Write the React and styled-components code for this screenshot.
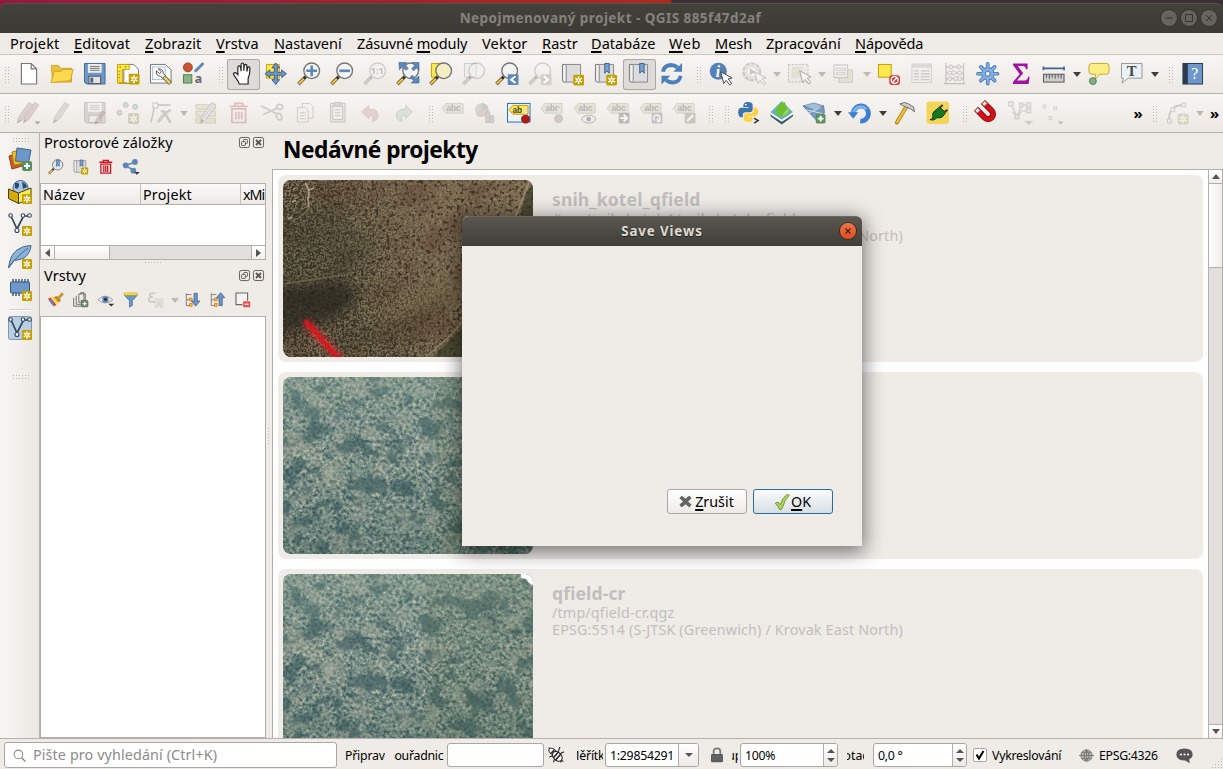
import React from 'react';
import styled, { createGlobalStyle, css } from 'styled-components';

const FONT = '"Noto Sans", "Open Sans", "Liberation Sans", sans-serif';

const GlobalStyle = createGlobalStyle`
  * { box-sizing: border-box; }
  html, body { margin: 0; padding: 0; overflow: hidden; }
  body { font-family: ${FONT}; font-size: 14.5px; color: #000; background: #efebe7; }
  u { text-decoration-thickness: 2px; text-underline-offset: 2px; text-decoration-skip-ink: none; }
`;

/* ------------------------------------------------------------------ icons */

const Badge = ({ x = 12, y = 12, s = 11, fill = '#c4a000', ink = '#fff' }) => (
  <g transform={`translate(${x} ${y}) scale(${s / 11})`}>
    <rect width="11" height="11" rx="1.5" fill={fill} />
    <path d="M5.5 1.5v8M2 3.5l7 4M2 7.5l7-4" stroke={ink} strokeWidth="1.5" />
    <circle cx="5.5" cy="5.5" r=".9" fill={fill} />
  </g>
);
const PlusBadge = ({ x = 14, y = 14 }) => (
  <g transform={`translate(${x} ${y})`}>
    <rect width="10" height="10" rx="2" fill="#59905c" />
    <path d="M5 2v6M2 5h6" stroke="#fff" strokeWidth="2" />
  </g>
);
const Lens = ({ dim, cx = 15, cy = 9, r = 8, children, fill = '#f4f5f3' }) => (
  <g opacity={dim ? 0.28 : 1}>
    <path d={`M${cx - 6} ${cy + 6}L1.5 22.5`} stroke="#333" strokeWidth="3.4" />
    <path d={`M${cx - 8} ${cy + 8}L1.7 22.300`} stroke={dim ? '#888' : '#fcc536'} strokeWidth="2.200" />
    <circle cx={cx} cy={cy} r={r} fill={fill} stroke="#777" strokeWidth="1.4" />
    {children}
  </g>
);
const Cursor = ({ x = 11, y = 9 }) => (
  <path transform={`translate(${x} ${y})`} d="M1 1l3 12 2.6-3.2 3.6 4.6 2-1.6-3.6-4.5 4-1z" fill="#fff" stroke="#444" strokeWidth="1" />
);
const Tag = ({ children }) => (
  <g opacity=".5">
    <path d="M5 2.500h17.500v10H5L1 7.500z" fill="#d8d5c4" stroke="#b3b1a3" />
    <text x="5.500" y="10.300" fontSize="8.500" fontWeight="bold" fill="#777" fontFamily="Liberation Sans">abc</text>
    {children}
  </g>
);
const MapSheet = () => (
  <g>
    <path d="M1.500 2.500h4v18h-2q-2 0-2-2z" fill="#eee" stroke="#777" />
    <path d="M5.500 2.500h14.500v18H4" fill="#dcdcdc" stroke="#888" />
    <path d="M5.500 2.500v17" stroke="#999" />
  </g>
);
const Ribbon = ({ x = 12 }) => <path d={`M${x} 1.500h4.500v10l-2.200-2.600-2.300 2.600z`} fill="#7ba3d0" stroke="#38618f" />;
const Floppy = () => (
  <g>
    <path d="M1.500 1.500h21v21h-19l-2-2z" fill="#6d97c9" stroke="#466a94" />
    <rect x="5" y="2" width="14" height="9" fill="#eee" />
    <path d="M7 4.500h10M7 6.500h10M7 8.500h10" stroke="#777" />
    <rect x="6" y="14.500" width="12" height="7.500" fill="#e2e2e2" stroke="#555" />
    <rect x="7.500" y="16" width="3" height="5" fill="#466a94" />
  </g>
);
const Pencil = ({ x = 0, fill = '#ccc8b4' }) => (
  <g transform={`translate(${x} 0)`}>
    <path d="M15 1.500l4.500 2.500L9 19l-5.500 3.500L5 16z" fill={fill} stroke="#999" />
    <path d="M17 3L6.500 17.500" stroke="#aaa" />
    <path d="M3.500 22.500l1-4 2.500 1.500z" fill="#777" />
  </g>
);
const Vee = ({ stroke = '#33475b' }) => (
  <g fill="none" stroke={stroke} strokeWidth="1.700">
    <path d="M3 4l6 13L15.500 4h6" />
    <g fill="#fff" strokeWidth="1.100"><circle cx="2.600" cy="3.500" r="1.800" /><circle cx="9" cy="18.500" r="2" /><circle cx="15" cy="3.500" r="1.800" /><circle cx="21.500" cy="3.500" r="1.800" /></g>
  </g>
);
const SmallDown = ({ x = 18, y = 20, fill = '#555' }) => <path d={`M${x} ${y}h6l-3 3z`} fill={fill} />;

const ICONS = {
  newProject: <path d="M4.500 1.500h10l5.500 5.500v15.500H4.500zM14.500 1.500V7H20" fill="#fff" stroke="#777" strokeWidth="1.200" />,
  open: <g stroke="#d1a62c"><path d="M1.500 3.500h7l2 3h11.500v14H2.500z" fill="#e9bf3c" /><path d="M1 21L4.500 9.500h7l2-2h10L21 19z" fill="#fcd94f" /></g>,
  save: <Floppy />,
  newLayout: <g><path d="M8 2.500h10l5 5V22H8z" fill="#fff" stroke="#777" /><path d="M1.500 2.500h12v5h-7v14h-5z" fill="#fce94f" stroke="#c4a000" /><path d="M3 21.500h8" stroke="#c4a000" strokeWidth="2" /><path d="M9 5h3M3.500 5h3M3.500 9v10" stroke="#c4a000" strokeDasharray="1.500 1.500" strokeWidth="2" /><Badge x={13} y={12} /></g>,
  layoutMgr: <g><path d="M1.500 2.500h15l6 5.500v13.500h-21z" fill="#fff" stroke="#777" /><rect x="3.500" y="5" width="13" height="13" fill="none" stroke="#9bc0e5" /><path d="M14 14l8 8" stroke="#7a6b2e" strokeWidth="4.500" /><path d="M14.500 14.500l7 7" stroke="#e3d27a" strokeWidth="2.500" /><path d="M7.500 9q-.5 5 4 5.500l2.500 2 2.500-2.500-2-2.500q0-4.500-5-4.500l3 3-1.500 2z" fill="#fff" stroke="#555" /></g>,
  style: <g><circle cx="6" cy="5.500" r="4.500" fill="#cb5530" stroke="#9d3b1c" /><path d="M21 2l-7 7" stroke="#5d87b7" strokeWidth="3" strokeLinecap="round" /><rect x="1.500" y="13" width="8.500" height="8.500" fill="#8db38c" stroke="#4c8050" /><text x="13" y="21.500" fontSize="12.500" fontWeight="bold" fill="#666">a</text></g>,
  hand: <path d="M8.500 22.500c-1-4-5-7-6-10.500 .5-1.800 2.500-1.500 4.500 1V5.500c0-2 2.500-2 2.800 0l.5 4V2.500c0-2 2.600-2 2.800 0v6.500l.5-5.500c.3-1.600 2.600-1.500 2.600.3v6l.8-4c.5-1.400 2.400-1 2.400.6 0 5-.9 8-1.900 10.500v5.600z" fill="#fff" stroke="#222" strokeWidth="1.200" />,
  panSel: <g><path d="M2.500 2.500h13v14h-13z" fill="#fce94f" stroke="#c4a000" /><path d="M12 1l4 5h-2.500v4.500H18V8l5 4-5 4v-2.500h-4.500V18H16l-4 5-4-5h2.500v-4.500H6V16l-5-4 5-4v2.500h4.500V6H8z" fill="#6d97c9" stroke="#2b4b6f" strokeWidth=".8" /></g>,
  zoomIn: <Lens><path d="M15 3.500v11M9.500 9h11" stroke="#5d87b7" strokeWidth="2.600" /></Lens>,
  zoomOut: <Lens><path d="M9.500 9h11" stroke="#5d87b7" strokeWidth="2.800" /></Lens>,
  zoom11: <Lens dim><text x="7.800" y="12.500" fontSize="9.500" fontWeight="bold" fill="#333">1:1</text></Lens>,
  zoomFull: <g><Lens /><path d="M3 .5h8L9 3l3.500 3.500-2 2L6.500 5 3.500 8zM23.500.5v8L21 6l-3 3-2-2 3-3.500L16.500.5zM23.500 21.500h-8L18 19l-3.500-3.500 2-2L20 17l3.500-2.500z" fill="#5d87b7" stroke="#3c638f" strokeWidth=".6" /></g>,
  zoomSel: <g><path d="M2.500 1.500h12v14h-12z" fill="#fce94f" stroke="#c4a000" /><Lens fill="#f5eec3" /></g>,
  zoomLayer: <g><path d="M2.500 1.500h12v14h-12z" fill="#eee" stroke="#ccc" /><Lens dim /></g>,
  zoomLast: <g><Lens /><rect x="13" y="12.500" width="11" height="11" rx="1" fill="#5d87b7" /><path d="M21 14.500L16.500 18l4.500 3.500" stroke="#fff" strokeWidth="2" fill="none" /></g>,
  zoomNext: <g><Lens dim /><rect x="13" y="12.500" width="11" height="11" rx="1" fill="#d2d0cc" /><path d="M16 14.500l4.500 3.500-4.500 3.500" stroke="#fff" strokeWidth="2" fill="none" /></g>,
  newMap: <g><MapSheet /><Badge x={12.5} y={13} /></g>,
  newBookmark: <g><MapSheet /><Ribbon x={11} /><Badge x={12.5} y={13} /></g>,
  bookmarks: <g transform="translate(1 0)"><MapSheet /><Ribbon /></g>,
  refresh: <g fill="none" stroke="#4d80bb" strokeWidth="4"><path d="M3 10q1-6.500 8-7 4 0 7 2.500" /><path d="M21 14q-1 6.500-8 7-4 0-7-2.500" /><path d="M22.500 1v9h-9zM1.500 23v-9h9z" fill="#4d80bb" stroke="none" /></g>,
  identify: <g><circle cx="9.500" cy="9.500" r="8.700" fill="#5482b8" /><text x="7" y="15" fontSize="16" fontWeight="bold" fontStyle="italic" fill="#fff" fontFamily="Liberation Serif">i</text><Cursor /></g>,
  action: <g opacity=".26"><circle cx="10" cy="10" r="8.500" fill="#ddd" stroke="#666" strokeWidth="2.500" strokeDasharray="4.500 1" /><circle cx="10" cy="10" r="5.500" fill="#fff" stroke="#777" /><path d="M8 6.500l6 3.500-6 3.500z" fill="#555" /><Cursor x={12} /></g>,
  select: <g opacity=".42"><rect x="1.500" y="2.500" width="20" height="18" fill="#e6e4dc" stroke="#777" strokeDasharray="2 1.500" /><rect x="5" y="5" width="11" height="11" fill="#cfcbb6" /><Cursor x={12} y={8} /></g>,
  selectForm: <g opacity=".5"><rect x="7" y="8" width="14" height="13" fill="#d8d4bb" stroke="#aaa" /><rect x="2" y="3" width="14" height="13" fill="#eee" stroke="#999" /><path d="M4.500 6.500h9v2h-9zM4.500 11h9v2h-9z" fill="#fff" stroke="#999" strokeWidth=".8" /></g>,
  deselect: <g><rect x="1.500" y="2.500" width="13" height="13" fill="#fce94f" stroke="#c4a000" /><rect x="12.500" y="13.500" width="11" height="10" rx="3" fill="#de3535" /><circle cx="18" cy="18.500" r="3.500" fill="none" stroke="#fff" strokeWidth="1.400" /><path d="M15.500 21l5-5" stroke="#fff" strokeWidth="1.400" /></g>,
  table: <g opacity=".42"><rect x="2" y="2" width="20" height="19" fill="#eee" stroke="#aaa" /><rect x="2" y="2" width="20" height="4" fill="#bbb" /><path d="M4 9h5M11 9h9M4 12h5M11 12h9M4 15h5M11 15h9M4 18h5M11 18h9" stroke="#999" strokeWidth="1.300" /></g>,
  abacus: <g opacity=".42" fill="none" stroke="#888"><path d="M3 1v21M21 1v21M3 5h18M3 11h18M3 17h18M1 22h22" strokeWidth="1.300" /><g fill="#eed5d5"><circle cx="8" cy="5" r="2" /><circle cx="16" cy="5" r="2" /></g><g fill="#eee"><circle cx="7" cy="11" r="2" /><circle cx="11" cy="11" r="2" /><circle cx="17" cy="11" r="2" /><circle cx="7" cy="17" r="2" /><circle cx="13" cy="17" r="2" /><circle cx="17" cy="17" r="2" /></g></g>,
  gear: <g stroke="#4277b6" fill="none"><path d="M12 2v20M2 12h20M5 5l14 14M19 5L5 19" strokeWidth="3.800" strokeLinecap="round" /><circle cx="12" cy="12" r="6.800" fill="#4277b6" stroke="none" /><path d="M12 2v20M2 12h20M5 5l14 14M19 5L5 19" strokeWidth="2.200" stroke="#82aee0" strokeLinecap="round" /><circle cx="12" cy="12" r="6" fill="#82aee0" stroke="none" /><circle cx="12" cy="12" r="2.500" fill="#f4f2ee" stroke="#4277b6" /></g>,
  sum: <path d="M4 1.500h15v6h-1.500q-.5-3-3-3.500H9l5.500 7.500L8 19h8q3-.5 3.500-4H21l-1 7.500H4v-2l7-8L4 3z" fill="#a112a1" />,
  measure: <g><path d="M1 6.500h22M1.500 4.500v4M22.500 4.500v4" stroke="#44658e" strokeWidth="1.800" /><rect x="1.500" y="12.500" width="21" height="8" fill="#ccc" stroke="#555" /><path d="M4.500 13v3M7.500 13v4M10.500 13v3M13.500 13v4M16.500 13v3M19.500 13v4" stroke="#555" /></g>,
  tips: <g><path d="M5 1.500h15q2.500 0 2.500 2.500v6q0 2.500-2.500 2.500h-7L8 18l1-5.500H5Q2 12.500 2 10V4q0-2.500 3-2.500z" fill="#fcee83" stroke="#c4a83a" /><circle cx="6" cy="19.500" r="3.500" fill="#84b083" stroke="#4c8050" /></g>,
  textNote: <g><path d="M1.500 1.500h21v15h-14L2 21.500l1.500-5h-2z" fill="#eaf1f4" stroke="#999" /><text x="7" y="14" fontSize="15" fontWeight="bold" fill="#444" fontFamily="Liberation Serif">T</text></g>,
  help: <g><rect x="2" y="1.500" width="20" height="21" fill="#6d97c9" stroke="#273b50" /><rect x="2" y="1.500" width="5" height="21" fill="#2a3c4e" /><text x="10.500" y="17.500" fontSize="16" fill="#fff" fontFamily="Liberation Serif">?</text></g>,

  editsMulti: <g opacity=".45"><Pencil x={-3} fill="#c7aaa8" /><Pencil x={3} fill="#c8a4a2" /><SmallDown x={18} y={21} /></g>,
  edit: <g opacity=".45"><Pencil /></g>,
  saveEdits: <g><g opacity=".3" fill="none"><path d="M1.500 1.500h21v21h-19l-2-2z" fill="#999" stroke="#666" /><rect x="5" y="2" width="14" height="9" fill="#eee" /><path d="M7 4.500h10M7 6.500h10M7 8.500h10" stroke="#777" /><rect x="6" y="14.500" width="12" height="7.500" fill="#e2e2e2" stroke="#555" /></g><g transform="translate(10 9) scale(.65)" opacity=".6"><Pencil fill="#d2aaa4" /></g></g>,
  addPoint: <g opacity=".6"><g fill="#c0ccc3" stroke="#98a59b"><circle cx="3.500" cy="12" r="2.500" /><circle cx="10" cy="4" r="2.500" /><circle cx="19.500" cy="6" r="2.500" /></g><Badge x={12.5} y={12.5} fill="#bdb79c" /></g>,
  vertex: <g opacity=".36" fill="none" stroke="#777"><path d="M6 4h16M6 4L2 22" strokeWidth="1.500" /><rect x="4" y="2" width="5" height="5" fill="#fff" /><path d="M9 21.500L17 12" stroke="#999" strokeWidth="3.500" /><path d="M12 10l6 2 4-3M16 12l6 10" stroke="#888" strokeWidth="2.500" /></g>,
  modify: <g opacity=".5"><path d="M2 3.500h20v5H2zM2 10.500h20v5H2zM2 17.500h20v5H2z" fill="#dad6b9" stroke="#b7b391" /><g transform="translate(3 0)"><Pencil fill="#ddd" /></g></g>,
  trash: <g opacity=".28" fill="none" stroke="#a33c3c" strokeWidth="1.700"><path d="M5 8h14v14H5zM3 5.500h18M8 5V2.500h8V5M9 11v8M12 11v8M15 11v8" /></g>,
  cut: <g opacity=".28" fill="none" stroke="#777" strokeWidth="1.800"><path d="M1 5l16 8M3 14l15-7" /><ellipse cx="20" cy="6" rx="3" ry="2.500" /><ellipse cx="19.500" cy="16" rx="2.500" ry="3.500" transform="rotate(-20 19.500 16)" /></g>,
  copy: <g opacity=".42" fill="#f3f2ef" stroke="#999"><path d="M9.500 2.500h8l3 3v12h-11z" /><path d="M4.500 6.500h8l3 3v12h-11z" /><path d="M7 12h6M7 15h6M7 18h6" /></g>,
  paste: <g opacity=".48" fill="#f3f2ef" stroke="#999"><path d="M4.500 2.500h15v19h-15z" fill="#dcdad4" /><path d="M7 5h10v14H7z" /><path d="M8.500 1.500h7v4h-7z" fill="#bbb" /><path d="M9 9h6M9 12h6M9 15h6" /></g>,
  undo: <path opacity=".4" d="M3 11l7-6.500v4q10-.5 9.500 7-.5 4-5.500 5.500-1-1.500 0-2.500 2-3.500-4-3.500V18z" fill="#cfa79e" stroke="#b08a82" />,
  redo: <path opacity=".4" d="M21 11l-7-6.500v4q-10-.5-9.500 7 .5 4 5.500 5.500 1-1.500 0-2.500-2-3.500 4-3.500V18z" fill="#b9cdbf" stroke="#8aa593" />,
  label: <Tag />,
  diagram: <g opacity=".42"><circle cx="8" cy="9" r="7" fill="#b3b0a8" /><path d="M8 9V2a7 7 0 0 1 7 7z" fill="#8f9c8c" /><path d="M8 9L2 14a7 7 0 0 0 8 1.500z" fill="#c49c98" /><path d="M12 11h4v11h-4zM16 15h4v7h-4z" fill="#aaa" stroke="#888" /></g>,
  pinActive: <g><rect x=".5" y="2.500" width="23" height="19" fill="#eef3f7" stroke="#1f6fd0" /><path d="M6 4.500h15.500v9H6L2 9z" fill="#fce94f" stroke="#c4a000" /><text x="5.500" y="12" fontSize="8.500" fontWeight="bold" fill="#444" fontFamily="Liberation Sans">ab</text><path d="M19 7v9" stroke="#ddd" strokeWidth="2.500" /><circle cx="19" cy="18.500" r="4.300" fill="#b01c1c" stroke="#7c1010" strokeWidth=".6" /></g>,
  pin: <Tag><path d="M19 7v9" stroke="#ddd" strokeWidth="2.500" /><circle cx="19" cy="18" r="4" fill="#b9a3a3" stroke="#999" /></Tag>,
  labelEye: <Tag><ellipse cx="16" cy="18.500" rx="7" ry="4" fill="#eee" stroke="#777" /><circle cx="16" cy="18.500" r="2.500" fill="#777" /></Tag>,
  labelMove: <Tag><rect x="13" y="12" width="11" height="11" rx="1" fill="#888" /><path d="M14.500 17.500h7M18 14l3.500 3.500L18 21" stroke="#fff" strokeWidth="2" fill="none" /></Tag>,
  labelRotate: <Tag><rect x="13" y="12" width="11" height="11" rx="1" fill="#999" /><path d="M16 20a3.300 3.300 0 1 1 4.500 0M19 17.500v3.500h3" stroke="#fff" strokeWidth="1.500" fill="none" /></Tag>,
  labelEdit: <Tag><rect x="13" y="12" width="11" height="11" rx="1" fill="#a5a18e" /><path d="M15.500 20.500l6-6" stroke="#fff" strokeWidth="2.200" /></Tag>,
  python: <g><path d="M11 1C6.500 1 6.500 3.500 6.500 6H12v1H4C0 7 .5 16.500 4 16.500h2V14q0-2.500 3-2.500h4.500q2.500 0 2.500-2.500V4Q16 1 11 1z" fill="#3b75a9" /><path d="M11.500 21.500c5 0 4.500-2.500 4.500-5h-5.500v-1H18.500c4.500 0 4-9.500 0-9H17v3.500q0 2.500-3 2.500h-4q-3 0-3 2.500v4q0 2.500 4.500 2.500z" fill="#ffd343" /><circle cx="9" cy="3.700" r="1" fill="#fff" /><path d="M17.500 17.500l4 2.500-4 2.500" stroke="#333" strokeWidth="1.500" fill="none" /></g>,
  plugin1: <g><path d="M.5 13v2.500L12 24l11.500-8.500V13z" fill="#335a68" /><path d="M.5 11.500L12 0l11.500 11.500L12 19z" fill="#66b6ae" /><path d="M.5 11.500L12 19l11.500-7.500v2.200L12 21.300.5 13.700z" fill="#fff" /><path d="M6 12q0-8 9-11 5 12-4 14-3 0-5-3z" fill="#70bf2e" /><path d="M13 15q4 0 7-7-5 0-7 7z" fill="#9bd94c" /></g>,
  mesh: <g><path d="M0 5l11-3 10 3-9 5z" fill="#a3bdd9" stroke="#6486ab" strokeWidth=".8" /><path d="M0 5l12 5 9-5 1 7-8 8z" fill="#7899bd" stroke="#56789d" strokeWidth=".8" /><path d="M4 9l16 4M6 12l12-5" stroke="#c8dcf0" /><PlusBadge x={13} y={13} /></g>,
  rotate: <g><path d="M5.500 12a7.700 7.700 0 1 1 7 8.500" fill="none" stroke="#3c7ed0" strokeWidth="5" /><path d="M5.800 11.500a7.500 7.500 0 0 1 13-3" fill="none" stroke="#7db2ee" strokeWidth="3" /><path d="M0 11.500h10.500L5.300 18z" fill="#3c7ed0" /></g>,
  hammer: <g><path d="M13 7L4 22" stroke="#a87d14" strokeWidth="4" strokeLinecap="round" /><path d="M13 7L4.300 21.500" stroke="#f0bd37" strokeWidth="2.400" strokeLinecap="round" /><path d="M7 3q5-3 9 0l5 3 1 5-4-3-5-2q-3-1-6-3z" fill="#ccc" stroke="#555" strokeWidth=".8" /></g>,
  plug: <g><rect x=".5" y=".5" width="23" height="23" rx="3" fill="#f3d558" /><path d="M4 19q3 0 3-3-1-4 2-6l5-4 6 6-3 4q-3 2-6 1-1 2-4 2.500z" fill="#157a1f" stroke="#173a10" /><path d="M14 7l3-3M19 11l3-2" stroke="#333" strokeWidth="2" /></g>,
  magnet: <g transform="rotate(-45 12 12)"><path d="M4.500 2v12a7.500 7.500 0 0 0 15 0V2h-5v12a2.500 2.500 0 0 1-5 0V2z" fill="#d80f16" stroke="#8b0a0e" /><path d="M5 2h4V5.500H5zM15 2h4V5.500h-4z" fill="#eee" stroke="#b55" strokeWidth=".7" /></g>,
  topo: <g opacity=".4" fill="none" stroke="#aaa" strokeWidth="1.600"><path d="M3 3l6 13 5-12h7M5 11l3 4M14 10h7M14 10l-4 6" /><path d="M1 1h4v4H1zM7 14h4v4H7zM12 2h3v4h-3zM19 2h4v4h-4zM19 8h4v4h-4z" fill="#e7e5e1" /><SmallDown y={21} fill="#777" /></g>,
  dots: <g opacity=".4"><path d="M2 4h3v3H2zM13 6h3v3h-3zM8 16h3v3H8z" fill="#eee" stroke="#999" /><SmallDown x={17} y={21} fill="#777" /></g>,
  curve: <g opacity=".42"><path d="M3 21Q2 4 18 4" fill="none" stroke="#999" strokeWidth="2" /><path d="M1.500 18.500h4v4h-4zM5 7h4v4H5zM16 2h4v4h-4z" fill="#eee" stroke="#999" /><Badge x={12} y={13} fill="#b5b193" /></g>,

  dataSource: <g><path d="M1 9l10-3 3 13-10 3z" fill="#cf5a2a" stroke="#943a16" /><path d="M4 5l11-3 2 14-11 2z" fill="#f2c41b" stroke="#a8830e" /><path d="M9 1l14 2-2.500 13L7.500 14z" fill="#6d97c9" stroke="#3d648f" /><PlusBadge /></g>,
  geopackage: <g><circle cx="12.500" cy="8" r="7.500" fill="#a9c5e3" stroke="#44658e" /><path d="M7 3q5-1 4 3t-4 2zM14 2q4 1 5 5l-4 2z" fill="#2d4a6c" /><path d="M.5 9l10 4v10.500L.5 18.500z" fill="#d8a908" stroke="#3f3a1a" /><path d="M10.500 13L23 8v10.500l-12.500 5z" fill="#fce94f" stroke="#3f3a1a" /><Badge x={14} y={14} s={10} /></g>,
  shapefile: <g><Vee /><Badge x={14} y={14} s={10} /></g>,
  spatialite: <g><path d="M.5 23Q2 10 9 5 15 .5 23 .5 22 9 16 13q-5 2-10 2.500z" fill="#8eb2d8" stroke="#44658e" /><path d="M.5 23Q7 13 20 3" stroke="#44658e" fill="none" /><Badge x={14} y={14} s={10} /></g>,
  memory: <g><path d="M5 1v4M8 1v4M11 1v4M14 1v4M17 1v4M20 1v4M5 14v4M8 14v4M11 14v4" stroke="#33475b" strokeWidth="1.300" /><rect x="2.500" y="4" width="19" height="11" rx="1" fill="#6d97c9" stroke="#33577f" /><Badge x={14} y={13} s={10} /></g>,
  virtual: <g><rect x=".5" y=".5" width="23" height="23" rx="2" fill="#b9cde3" stroke="#7d98b5" /><Vee /><Badge x={14} y={14} s={10} /></g>,

  zoomBm: <g><Lens fill="#e6eaee" /><Ribbon x={13} /></g>,
  trashRed: <g fill="none" stroke="#cc1420" strokeWidth="2"><path d="M4.500 8h15v14h-15zM2 5h20M8 5V2h8v3M9 10v10M12 10v10M15 10v10" /></g>,
  share: <g stroke="#5d87b7" strokeWidth="2.500" fill="#5d87b7"><path d="M19 4.500L4 10l13 8" fill="none" /><circle cx="18.500" cy="4.500" r="3.200" /><circle cx="4" cy="10" r="3.200" /><circle cx="16" cy="18" r="3.200" /><path d="M17 20h9l-4.500 4.500z" fill="#333" stroke="none" /></g>,
  brush: <g><path d="M23 2l-8 9" stroke="#c9963a" strokeWidth="4.500" /><path d="M0 10l13-3 6 7-10 8z" fill="#f09331" /><path d="M3 9l5-1 9 9-4 3z" fill="#fbe16a" /><path d="M0 10l4-1 9 11-4 2z" fill="#e33c32" /><path d="M11 7l3-1 6 7-3 3z" fill="#b98525" /><path d="M1 13l4-1 5 8-3 1z" fill="#5a8ccb" /></g>,
  group: <g fill="none" stroke="#666" strokeWidth="1.400"><path d="M1 9v13h14M5 6v13h10M9 3h10v13H9zM12 3V1h5v12h-5" /><PlusBadge x={13} y={13} /></g>,
  eye: <g><path d="M0 12Q11 1 23 12 11 22 0 12z" fill="#f0f0f0" stroke="#999" strokeWidth="1.500" /><circle cx="11.500" cy="11.500" r="5" fill="#5d87b7" /><circle cx="11.500" cy="11.500" r="2.200" fill="#222" /><path d="M16 18h9l-4.500 4.500z" fill="#333" /></g>,
  filter: <g><path d="M2 5h20l-7.500 8.500V21L10 23.500v-10z" fill="#6d97c9" stroke="#3d648f" /><path d="M2 1.500h20v3.500H2z" fill="#fce94f" stroke="#c4a000" /></g>,
  epsilon: <g opacity=".35"><path d="M11 2Q2 1 3 5q0 2 4 2.500Q1 8 1 12q1 5 10 3" fill="none" stroke="#777" strokeWidth="2.200" /><path d="M12 11h11v13h-3.500v-9h-1v6h-2v-6h-1v9H12z" fill="#ddd" stroke="#888" /></g>,
  expand: <g><path d="M2 2v19h6M2 12h6M2 4h8" stroke="#777" strokeWidth="1.400" fill="none" /><path d="M7 9.500h4v4H7zM7 18h4v4H7z" fill="#fcd94f" stroke="#e07b18" strokeWidth="1.500" /><path d="M14 2h5v12h4l-6.500 8-6.500-8h4z" fill="#6d97c9" stroke="#2f4f74" /></g>,
  collapse: <g><path d="M2 2v19h6M2 12h6M2 4h8" stroke="#777" strokeWidth="1.400" fill="none" /><path d="M7 9.500h4v4H7zM7 18h4v4H7z" fill="#fcd94f" stroke="#e07b18" strokeWidth="1.500" /><path d="M14 21h5V9h4l-6.500-8L10 9h4z" fill="#6d97c9" stroke="#2f4f74" /></g>,
  remove: <g><path d="M1.500 1.500h18v18h-18z" fill="#f5f3f1" stroke="#666" strokeWidth="1.700" /><rect x="12" y="14" width="12" height="10" rx="2" fill="#ef4a4a" stroke="#efebe7" /><path d="M15 19h6" stroke="#fff" strokeWidth="2" /></g>,

  float: <g fill="none" stroke="#555"><rect x="1" y="1" width="22" height="22" rx="4" strokeWidth="2" /><rect x="10" y="5.500" width="8.500" height="8.500" rx="1.500" strokeWidth="2" /><rect x="5.500" y="10" width="8.500" height="8.500" rx="1.500" fill="#efebe7" strokeWidth="2" /></g>,
  close: <g fill="none" stroke="#555"><rect x="1" y="1" width="22" height="22" rx="4" strokeWidth="2" /><path d="M6.500 6.500l11 11M17.500 6.500l-11 11" strokeWidth="4" /></g>,
  search: <g fill="none" stroke="#888" strokeWidth="2"><circle cx="10" cy="10" r="8" /><path d="M15.500 15.500L23 23" strokeWidth="2.600" /></g>,
  bug: <g stroke="#222" strokeWidth="1.600" fill="#fff"><path d="M1 5l22 17M2 15l10-4M8 23l4-9M18 0l-3 8M24 7l-7 4M1 1l8 5M20 23l-3-4" /><ellipse cx="7" cy="7" rx="6.500" ry="4" transform="rotate(40 7 7)" /><ellipse cx="14" cy="14" rx="8.500" ry="6" transform="rotate(45 14 14)" /><path d="M8 16l8-9M11 20l8-9M5 9l4-4" strokeWidth="2.400" /></g>,
  lock: <g><path d="M7 11V7q0-5 5-5t5 5v4" fill="none" stroke="#777" strokeWidth="2.600" /><rect x="3" y="10.500" width="18" height="12.500" rx="2" fill="#5c5c5c" /><path d="M4 14.500h16M4 18h16" stroke="#777" /></g>,
  globe: <g fill="none" stroke="#777" strokeWidth="1.500"><circle cx="12" cy="12" r="9" fill="#b5b3af" /><path d="M0 12h24M4 7h16M4 17h16M12 2v20M12 3Q4 12 12 21M12 3q8 9 0 18" /></g>,
  message: <g><path d="M12 2q11.500 0 11.500 8.500-.5 5-5 7l1 5.500-6.500-4Q.5 19 .5 10.500.5 2 12 2z" fill="#555" /><g fill="#fff"><circle cx="7" cy="10.500" r="1.500" /><circle cx="12" cy="10.500" r="1.500" /><circle cx="17" cy="10.500" r="1.500" /></g></g>,
  cancel: <path d="M5 2l7 5.500L19 2l3.500 4L16 12l6.500 6-3.500 4-7-5.500L5 22l-3.500-4L8 12 1.500 6z" fill="#656565" stroke="#444" />,
  ok: <path d="M2 14q2-2 4.500-1.500L9.500 16Q12 6 19 1q3-.5 4 1Q16 8 12 22q-1.500 1.500-3.500 1.500Q6 18 2 14z" fill="#b3d557" stroke="#57862a" strokeWidth="1.200" />,
};

const IconSvg = styled.svg`
  display: block;
  flex: none;
  overflow: visible;
`;
const Icon = ({ name, size = 22 }) => (
  <IconSvg width={size} height={size} viewBox="0 0 24 24" fill="none">{ICONS[name]}</IconSvg>
);

/* ------------------------------------------------------------- window top */

const Window = styled.div`
  position: relative;
  width: 1223px;
  height: 769px;
  display: flex;
  flex-direction: column;
  overflow: hidden;
  background: linear-gradient(90deg, #96183a, #ab2a20 671px, #392f34 672px);
`;
const TitleBar = styled.header`
  height: 30px;
  margin-top: 3px;
  flex: none;
  display: flex;
  align-items: center;
  border-radius: 6px 6px 0 0;
  border-top: 1px solid #54524d;
  background: linear-gradient(#42413c, #3b3a35);
  color: #85827b;
  font-weight: 700;
  font-size: 13.5px;
`;
const TitleText = styled.div`
  flex: 1;
  padding: 0 0 2px 60px;
  text-align: center;
  letter-spacing: 0.44px;
`;
const WindowButtons = styled.div`
  display: flex;
  gap: 4px;
  width: 62px;
  padding-bottom: 1px;
`;
const WindowButton = styled.span`
  width: 16px;
  height: 16px;
  border-radius: 50%;
  background: #66635c;
  box-shadow: 0 0 0 1px #33322e;
  display: grid;
  place-items: center;
`;
const MenuBar = styled.nav`
  height: 22px;
  flex: none;
  display: flex;
  padding-left: 10px;
  background: #efebe7;
  border-bottom: 1px solid #cbc7c2;
`;
const MenuItem = styled.div`
  flex: none;
  width: ${(p) => p.$w}px;
  line-height: 20px;
  font-size: 14.5px;
  letter-spacing: ${(p) => p.$ls || 0}px;
  white-space: nowrap;
`;
const MENUS = [
  [64, 'Pro', 'j', 'ekt', 0.2], [71, '', 'E', 'ditovat', 0.1], [71, '', 'Z', 'obrazit', 0.1], [58, '', 'V', 'rstva', 0.1],
  [83, '', 'N', 'astavení', 0], [125, 'Zásuvné ', 'm', 'oduly', -0.12], [60, 'Vekt', 'o', 'r', 0.2], [49, '', 'R', 'astr', 0.1],
  [78, '', 'D', 'atabáze', 0.05], [46, '', 'W', 'eb', 0.5], [51, '', 'M', 'esh', 0], [89, 'Zprac', 'o', 'vání', 0], [90, '', 'N', 'ápověda', -0.1],
];

/* --------------------------------------------------------------- toolbars */

const Toolbar = styled.div`
  height: 39px;
  flex: none;
  display: flex;
  align-items: center;
  background: linear-gradient(#f8f6f3, #ece8e4);
  border-bottom: 1px solid #b5b1ac;
`;
const ToolButton = styled.span`
  flex: none;
  width: ${(p) => p.$w || 33}px;
  height: 31px;
  display: grid;
  place-items: center;
  ${(p) => p.$active && css`
    background: #dedbd8;
    border-radius: 3px;
    box-shadow: inset 0 0 0 1px #aca8a3;
  `}
`;
const dots = css`
  background-image: radial-gradient(circle, #bab6b1 0.7px, transparent 0.9px);
  background-size: 3px 3px;
`;
const Grip = styled.span`
  flex: none;
  width: ${(p) => p.$w || 16}px;
  height: 17px;
  display: flex;
  justify-content: flex-end;
  padding-right: 3px;
  &::after { content: ''; width: 6px; ${dots} }
`;
const MenuArrow = styled.span`
  flex: none;
  width: 12px;
  display: flex;
  justify-content: center;
  &::after {
    content: '';
    border: 4.500px solid transparent;
    border-top: 5px solid ${(p) => (p.$dim ? '#bdbab6' : '#403e3b')};
    border-bottom: 0;
  }
`;
const Spacer = styled.span`flex: 1;`;
const Extension = styled.span`
  flex: none;
  width: ${(p) => p.$w}px;
  text-align: center;
  font-size: 15px;
  font-weight: 700;
  line-height: 20px;
  padding-bottom: 1px;
`;

/* each entry: icon name, "|" grip, "v" arrow, "-v" disabled arrow, "*name" pressed */
const ROW1 = 'newProject open save newLayout layoutMgr style | *hand panSel zoomIn zoomOut zoom11 zoomFull zoomSel zoomLayer zoomLast zoomNext newMap newBookmark *bookmarks refresh | identify action -v select -v selectForm -v deselect table abacus gear sum measure v tips textNote v | help'.split(' ');
const ROW2 = 'editsMulti edit saveEdits addPoint vertex -v modify trash cut copy paste undo redo | label diagram pinActive pin labelEye labelMove labelRotate labelEdit | | python plugin1 mesh v rotate v hammer plug | magnet topo dots'.split(' ');

const Tools = ({ items }) => items.map((it, i) => {
  if (it === '|') return <Grip key={i} />;
  if (it === 'v' || it === '-v') return <MenuArrow key={i} $dim={it === '-v'} />;
  const active = it[0] === '*';
  const name = active ? it.slice(1) : it;
  return <ToolButton key={i} $active={active}><Icon name={name} size={23.5} /></ToolButton>;
});

/* ------------------------------------------------------------------- body */

const Body = styled.div`
  flex: 1;
  min-height: 0;
  display: flex;
  background: #efebe7;
`;
const SideBar = styled.aside`
  width: 40px;
  flex: none;
  display: flex;
  flex-direction: column;
  align-items: center;
  padding-top: 4px;
  border-right: 1px solid #b5b1ac;
  background: linear-gradient(90deg, #f8f6f3, #ece8e4);
`;
const SideButton = styled.span`
  height: 32.600px;
  width: 39px;
  padding: 0 0 0 1px;
  display: grid;
  place-items: center;
`;
const SideGrip = styled.span`
  width: 18px;
  height: 6px;
  margin: ${(p) => p.$mt || 0}px 0 0 2px;
  ${dots}
`;
const SideRule = styled.span`
  width: 22px;
  height: 2px;
  margin: 3px 0 1px;
  background: #d5d1cc;
  border-bottom: 1px solid #fff;
`;
const Docks = styled.section`
  width: 226px;
  flex: none;
  display: flex;
  flex-direction: column;
`;
const DockTitle = styled.div`
  height: 20px;
  display: flex;
  align-items: center;
  gap: 3px;
  padding: 0 2px 2px 4px;
  font-size: 14.5px;
`;
const DockName = styled.span`
  flex: 1;
  letter-spacing: 0.1px;
`;
const DockTools = styled.div`
  height: 30px;
  display: flex;
  align-items: center;
  padding: 0 0 2px 3.5px;
`;
const BookmarkTable = styled.div`
  height: 77px;
  display: flex;
  flex-direction: column;
  background: #fff;
  border: 1px solid #b2aea9;
`;
const TableHead = styled.div`
  height: 21px;
  display: flex;
  overflow: hidden;
  background: linear-gradient(#fbfaf9, #ece9e6);
  border-bottom: 1px solid #b2aea9;
`;
const HeadCell = styled.span`
  flex: none;
  width: 100px;
  padding-left: 2px;
  line-height: 21px;
  font-size: 14.3px;
  letter-spacing: ${(p) => (p.$tight ? -1 : 0.2)}px;
  border-right: 1px solid #c3bfba;
`;
const HScroll = styled.div`
  height: 14px;
  margin-top: auto;
  display: flex;
  background: #e2dfdc;
  border-top: 1px solid #b2aea9;
`;
const ScrollButton = styled.span`
  width: 13px;
  height: 13px;
  flex: none;
  display: grid;
  place-items: center;
  background: linear-gradient(#fff, #f1eeeb);
  &::after {
    content: '';
    border: 4px solid transparent;
    ${(p) => p.$dir === 'left' && 'border-left: 0; border-right: 5px solid #555;'}
    ${(p) => p.$dir === 'right' && 'border-right: 0; border-left: 5px solid #555;'}
    ${(p) => p.$dir === 'up' && 'border-top: 0; border-bottom: 5px solid #555;'}
    ${(p) => p.$dir === 'down' && 'border-bottom: 0; border-top: 5px solid #555;'}
  }
`;
const HThumb = styled.span`
  width: 56px;
  background: linear-gradient(#fff, #f1eeeb);
  border: solid #b2aea9;
  border-width: 0 1px;
`;
const HTrack = styled.span`
  flex: 1;
  border-right: 1px solid #b2aea9;
`;
const Splitter = styled.div`
  height: 6px;
  display: flex;
  justify-content: center;
  &::after { content: ''; width: 18px; height: 3px; margin-top: 1px; ${dots} }
`;
const LayerTree = styled.div`
  flex: 1;
  background: #fff;
  border: 1px solid #b2aea9;
`;
const VSplitter = styled.div`
  width: 6px;
  flex: none;
  display: flex;
  align-items: center;
  &::after { content: ''; width: 3px; height: 18px; margin-left: 1px; ${dots} }
`;
const Main = styled.main`
  flex: 1;
  min-width: 0;
  display: flex;
  flex-direction: column;
`;
const Heading = styled.h1`
  height: 36px;
  margin: 0;
  padding-left: 11px;
  font-size: 22.7px;
  line-height: 33px;
  font-weight: 700;
  letter-spacing: -0.48px;
`;
const Welcome = styled.div`
  flex: 1;
  min-height: 0;
  display: flex;
  background: #fff;
  border: 1px solid #b2aea9;
  border-bottom: 0;
`;
const ProjectList = styled.div`
  flex: 1;
  padding: 5px 5px 0;
  display: flex;
  flex-direction: column;
  gap: 10px;
  overflow: hidden;
`;
const ProjectCard = styled.article`
  height: 187px;
  flex: none;
  display: flex;
  gap: 19px;
  padding: 5px;
  border-radius: 8px;
  background: #efebe7;
  color: #c1bfbd;
`;
const Thumb = styled.svg`
  width: 250px;
  height: 177px;
  flex: none;
  border-radius: 8px;
`;
const ProjectInfo = styled.div`
  padding-top: 9px;
  font-size: 14.3px;
  line-height: 17px;
`;
const ProjectName = styled.div`
  font-size: 17.5px;
  line-height: 21px;
  font-weight: 700;
  letter-spacing: 0.15px;
`;
const InfoLine = styled.div`
  letter-spacing: 0.18px;
  white-space: nowrap;
`;
const VScroll = styled.div`
  width: 14px;
  flex: none;
  display: flex;
  flex-direction: column;
  background: #e2dfdc;
  border-left: 1px solid #b2aea9;
`;
const VThumb = styled.span`
  height: 85px;
  background: linear-gradient(90deg, #fff, #f1eeeb);
  border: solid #b2aea9;
  border-width: 1px 0;
`;
const VTrack = styled.span`
  flex: 1;
  border-bottom: 1px solid #b2aea9;
`;

/* ------------------------------------------------------ aerial thumbnails */

const Palette = ({ id, freq, octaves, seed, r, g, b, gain = 2.6 }) => (
  <filter id={id} x="0" y="0" width="100%" height="100%" colorInterpolationFilters="sRGB">
    <feTurbulence type="fractalNoise" baseFrequency={freq} numOctaves={octaves} seed={seed} />
    <feColorMatrix values={`${gain} 0 0 0 ${0.5 - gain / 2} ${gain} 0 0 0 ${0.5 - gain / 2} ${gain} 0 0 0 ${0.5 - gain / 2} 0 0 0 0 1`} />
    <feComponentTransfer>
      <feFuncR type="table" tableValues={r} /><feFuncG type="table" tableValues={g} /><feFuncB type="table" tableValues={b} />
    </feComponentTransfer>
  </filter>
);
const Specks = ({ id, freq, seed, rgb, gain, off, octaves = 2 }) => (
  <filter id={id} x="0" y="0" width="100%" height="100%" colorInterpolationFilters="sRGB">
    <feTurbulence type="fractalNoise" baseFrequency={freq} numOctaves={octaves} seed={seed} />
    <feColorMatrix values={`0 0 0 0 ${rgb[0]} 0 0 0 0 ${rgb[1]} 0 0 0 0 ${rgb[2]} 0 ${gain} 0 0 ${off}`} />
  </filter>
);

const HillThumb = () => (
  <Thumb viewBox="0 0 250 177">
    <defs>
      <Palette id="h-base" freq="0.37" octaves={3} seed={4} gain={1.3} r=".34 .43 .5 .55 .63" g=".29 .37 .43 .48 .56" b=".22 .28 .33 .37 .45" />
      <Specks id="h-trees" freq="0.47" seed={9} rgb={[0.17, 0.18, 0.13]} gain={5} off={-2.2} />
      <Specks id="h-few" freq="0.27" seed={15} rgb={[0.2, 0.17, 0.13]} gain={10} off={-5.9} />
      <Specks id="h-tone" freq="0.03" seed={22} rgb={[0.38, 0.26, 0.2]} gain={4} off={-1.9} octaves={5} />
      <linearGradient id="h-fade" x1="0" y1="0.3" x2="1" y2="0">
        <stop offset=".1" stopColor="#ddd" /><stop offset=".4" stopColor="#777" /><stop offset=".6" stopColor="#111" />
      </linearGradient>
      <mask id="h-mask"><rect width="250" height="177" fill="url(#h-fade)" /></mask>
      <filter id="h-soft"><feGaussianBlur stdDeviation="6" /></filter>
      <filter id="h-glow"><feGaussianBlur stdDeviation="2.5" /></filter>
    </defs>
    <rect width="250" height="177" filter="url(#h-base)" />
    <rect width="250" height="177" filter="url(#h-tone)" opacity=".4" />
    <rect width="250" height="177" filter="url(#h-few)" opacity=".75" />
    <g filter="url(#h-soft)">
      <path d="M-10 35L45 25l50 35-10 30-95 12z" fill="#3c3e28" opacity=".3" />
      <path d="M-10 106l70-7 18 14-8 14-30 20-50 8z" fill="#14160e" opacity=".6" />
      <path d="M80 130l50-22 50-12v20l-60 26-30 6z" fill="#826e50" opacity=".5" />
      <path d="M50 150l60-10 60-30v15l-60 40-60 6z" fill="#3b2a1e" opacity=".3" />
    </g>
    <g mask="url(#h-mask)"><rect width="250" height="177" filter="url(#h-trees)" /></g>
    <path d="M22 3l3 5 1 5-1 6 1 8M13 20l-4 2M5 39l4-2M26 10l5-2" stroke="#b7aea0" strokeWidth="1.800" fill="none" opacity=".8" />
    <path d="M247 0l-15 38" stroke="#9c9079" strokeWidth="2" opacity=".8" />
    <path d="M142 177Q165 160 180 141" stroke="#948469" strokeWidth="1.500" fill="none" opacity=".8" />
    <path d="M150 177l30-30v30zM243 12l7-8v45l-14-9z" fill="#2e3720" opacity=".55" />
    <path d="M0 104l60-9" stroke="#7f795c" strokeWidth="1.500" fill="none" opacity=".6" />
    <path d="M22 141l38 42" stroke="#f0242c" strokeWidth="9" filter="url(#h-glow)" opacity=".6" />
    <path d="M22 141l38 42" stroke="#df151c" strokeWidth="3.300" />
  </Thumb>
);

const RegionThumb = ({ id, seam, notch }) => (
  <Thumb viewBox="0 0 250 177">
    <defs>
      <Palette id={`${id}-base`} freq="0.3" octaves={4} seed={7} gain={1.9} r=".24 .36 .49 .6 .78" g=".33 .46 .57 .65 .78" b=".33 .44 .53 .59 .71" />
      <Specks id={`${id}-dark`} freq="0.05" seed={31} rgb={[0.2, 0.33, 0.34]} gain={8} off={-4.2} octaves={6} />
      <Specks id={`${id}-light`} freq="0.045" seed={12} rgb={[0.72, 0.71, 0.63]} gain={8} off={-4.2} octaves={6} />
      <linearGradient id={`${id}-haze`} x1="0" y1="0" x2="0" y2="1">
        <stop stopColor="#8fa89c" stopOpacity=".35" /><stop offset=".5" stopColor="#66838a" stopOpacity=".1" /><stop offset="1" stopColor="#2f504e" stopOpacity=".28" />
      </linearGradient>
      <filter id={`${id}-soft`}><feGaussianBlur stdDeviation="3" /></filter>
    </defs>
    <rect width="250" height="177" filter={`url(#${id}-base)`} />
    <rect width="250" height="177" filter={`url(#${id}-light)`} opacity=".35" />
    <rect width="250" height="177" filter={`url(#${id}-dark)`} opacity=".6" />
    <rect width="250" height="177" fill={`url(#${id}-haze)`} />
    <path d={`M${seam} 0H250V177H${seam}z`} fill="#5b6b45" opacity=".12" />
    <g filter={`url(#${id}-soft)`} fill="none">
      <path d="M12 78q14-14 22 2t24 30" stroke="#c3bda6" strokeWidth="12" opacity=".22" />
      <g stroke="#29454c" opacity=".5">
        <path d="M0 73q12-6 20-12t16-14M112 104q10 8 18 14M62 52q14 8 20 24" strokeWidth="3" />
        <path d="M200 38q10 4 14 14M185 122q12 4 26-4" strokeWidth="7" />
      </g>
    </g>
    {notch && <path d="M238 0h12v11l-4-2-3-4-5-1z" fill="#fff" />}
  </Thumb>
);

/* ------------------------------------------------------------- status bar */

const StatusBar = styled.footer`
  height: 31px;
  flex: none;
  display: flex;
  align-items: center;
  padding-left: 4px;
  padding-top: 2px;
  background: #efebe7;
  border-top: 1px solid #b5b1ac;
  font-size: 12.3px;
`;
const Box = styled.div`
  flex: none;
  height: ${(p) => p.$h || 24}px;
  width: ${(p) => p.$w}px;
  margin-left: ${(p) => p.$ml || 0}px;
  display: flex;
  align-items: center;
  overflow: hidden;
  background: #fff;
  border: 1px solid #aaa6a1;
  border-radius: 3px;
`;
const SearchText = styled.span`
  margin-left: 7px;
  padding-bottom: 1px;
  font-size: 14.3px;
  letter-spacing: 0.13px;
  color: #8b8b8b;
  white-space: nowrap;
`;
const BoxText = styled.span`
  flex: 1;
  padding-left: 4px;
  letter-spacing: -0.25px;
  white-space: nowrap;
`;
const ClipLabel = styled.span`
  flex: none;
  width: ${(p) => p.$w}px;
  margin-left: ${(p) => p.$ml || 0}px;
  display: flex;
  justify-content: ${(p) => (p.$start ? 'flex-start' : 'center')};
  overflow: hidden;
  white-space: nowrap;
  letter-spacing: ${(p) => p.$ls || 0}px;
`;
const StatusIcon = styled.span`
  flex: none;
  margin-left: ${(p) => p.$ml}px;
`;
const Steps = styled.span`
  width: ${(p) => p.$w || 14}px;
  height: 100%;
  flex: none;
  display: flex;
  flex-direction: column;
  align-items: center;
  justify-content: center;
  gap: 5px;
  border-left: 1px solid #b2aea9;
  background: linear-gradient(#fff, #edeae7);
  ${(p) => !p.$single && css`
    &::before { content: ''; border: 4px solid transparent; border-top: 0; border-bottom: 4px solid #555; }
  `}
  &::after { content: ''; border: 4px solid transparent; border-bottom: 0; border-top: 4px solid #555; }
`;
const CheckBox = styled.span`
  flex: none;
  width: 14px;
  height: 14px;
  margin-left: 6px;
  border: 1px solid #aaa6a1;
  border-radius: 2px;
  background: #fff;
`;
const SizeGrip = styled.span`
  width: 11px;
  height: 11px;
  margin: auto 1px 1px auto;
  clip-path: polygon(100% 0, 100% 100%, 0 100%);
  ${dots}
`;

/* ----------------------------------------------------------------- dialog */

const Dialog = styled.div`
  position: absolute;
  left: 462px;
  top: 216px;
  width: 400px;
  height: 330px;
  display: flex;
  flex-direction: column;
  border-radius: 6px 6px 0 0;
  background: #efebe7;
  box-shadow: 0 4px 20px 2px rgba(0, 0, 0, 0.52);
`;
const DialogTitle = styled.div`
  height: 30px;
  flex: none;
  display: flex;
  align-items: center;
  padding: 0 6px 1px 0;
  border-radius: 6px 6px 0 0;
  border-top: 1px solid #6b6860;
  background: linear-gradient(#5a574f, #3f3e39);
  color: #dfdbd2;
  font-size: 13.3px;
  font-weight: 700;
  text-shadow: 0 1px 1px #222;
`;
const DialogName = styled.span`
  flex: 1;
  padding: 0 0 1px 22px;
  text-align: center;
  letter-spacing: 0.9px;
`;
const CloseButton = styled.span`
  width: 16px;
  height: 16px;
  border-radius: 50%;
  background: linear-gradient(#f1764c, #df4c1c);
  box-shadow: 0 0 0 1px #3a2a22;
  display: grid;
  place-items: center;
`;
const DialogActions = styled.div`
  flex: 1;
  display: flex;
  align-items: flex-end;
  justify-content: flex-end;
  gap: 6px;
  padding: 0 29px 32px 0;
`;
const PushButton = styled.button`
  width: 80px;
  height: 25px;
  padding: 0 1px 0 0;
  display: flex;
  align-items: center;
  justify-content: center;
  gap: ${(p) => (p.$primary ? 1 : 3)}px;
  font: 14.3px ${FONT};
  color: #000;
  border: 1px solid ${(p) => (p.$primary ? '#2a6ea0' : '#aaa6a1')};
  border-radius: 3px;
  background: ${(p) => (p.$primary ? 'linear-gradient(#fbfcfc, #d7dfe5)' : 'linear-gradient(#fff, #eeebe8)')};
`;

const Glyph = ({ d, color, w = 1 }) => (
  <IconSvg width="10" height="10" viewBox="0 0 10 10"><path d={d} stroke={color} strokeWidth={w} fill="none" /></IconSvg>
);

export default function App() {
  return (
    <>
      <GlobalStyle />
      <Window>
        <TitleBar>
          <TitleText>Nepojmenovaný projekt - QGIS 885f47d2af</TitleText>
          <WindowButtons>
            <WindowButton><Glyph color="#33322e" d="M1.500 5h7" /></WindowButton>
            <WindowButton><Glyph color="#33322e" d="M1.500 1.500h7v7h-7z" /></WindowButton>
            <WindowButton><Glyph color="#33322e" d="M2 2l6 6M8 2l-6 6" /></WindowButton>
          </WindowButtons>
        </TitleBar>
        <MenuBar>
          {MENUS.map(([w, a, u, b, ls]) => <MenuItem key={a + u + b} $w={w} $ls={ls}>{a}<u>{u}</u>{b}</MenuItem>)}
        </MenuBar>
        <Toolbar><Grip $w={12.5} /><Tools items={ROW1} /></Toolbar>
        <Toolbar>
          <Grip $w={12.5} /><Tools items={ROW2} />
          <Spacer />
          <Extension $w={16}>»</Extension>
          <Grip $w={15} /><Tools items={['curve', '-v']} />
          <Extension $w={17}>»</Extension>
        </Toolbar>

        <Body>
          <SideBar>
            <SideGrip />
            {['dataSource', 'geopackage', 'shapefile', 'spatialite', 'memory'].map((n) => <SideButton key={n}><Icon name={n} size={24} /></SideButton>)}
            <SideRule />
            <SideButton><Icon name="virtual" size={24} /></SideButton>
            <SideGrip $mt={29} />
          </SideBar>
          <Docks>
            <DockTitle>
              <DockName>Prostorové záložky</DockName><Icon name="float" size={11} /><Icon name="close" size={11} />
            </DockTitle>
            <DockTools>
              {['zoomBm', 'newBookmark', 'trashRed', 'share'].map((n) => <ToolButton key={n} $w={25}><Icon name={n} size={15.5} /></ToolButton>)}
            </DockTools>
            <BookmarkTable>
              <TableHead><HeadCell>Název</HeadCell><HeadCell>Projekt</HeadCell><HeadCell $tight>xMin</HeadCell></TableHead>
              <HScroll><ScrollButton $dir="left" /><HThumb /><HTrack /><ScrollButton $dir="right" /></HScroll>
            </BookmarkTable>
            <Splitter />
            <DockTitle>
              <DockName>Vrstvy</DockName><Icon name="float" size={11} /><Icon name="close" size={11} />
            </DockTitle>
            <DockTools>
              {['brush', 'group', 'eye', 'filter', 'epsilon'].map((n) => <ToolButton key={n} $w={25}><Icon name={n} size={15.5} /></ToolButton>)}
              <MenuArrow $dim />
              {['expand', 'collapse', 'remove'].map((n) => <ToolButton key={n} $w={25}><Icon name={n} size={15.5} /></ToolButton>)}
            </DockTools>
            <LayerTree />
          </Docks>
          <VSplitter />
          <Main>
            <Heading>Nedávné projekty</Heading>
            <Welcome>
              <ProjectList>
                <ProjectCard>
                  <HillThumb />
                  <ProjectInfo>
                    <ProjectName>snih_kotel_qfield</ProjectName>
                    <InfoLine>/tmp/snih_kotel_1/snih_kotel_qfield.qgs</InfoLine>
                    <InfoLine>EPSG:5514 (S-JTSK (Greenwich) / Krovak East North)</InfoLine>
                  </ProjectInfo>
                </ProjectCard>
                <ProjectCard><RegionThumb id="r1" seam={152} /></ProjectCard>
                <ProjectCard>
                  <RegionThumb id="r2" seam={143} notch />
                  <ProjectInfo>
                    <ProjectName>qfield-cr</ProjectName>
                    <InfoLine>/tmp/qfield-cr.qgz</InfoLine>
                    <InfoLine>EPSG:5514 (S-JTSK (Greenwich) / Krovak East North)</InfoLine>
                  </ProjectInfo>
                </ProjectCard>
              </ProjectList>
              <VScroll><ScrollButton $dir="up" /><VThumb /><VTrack /><ScrollButton $dir="down" /></VScroll>
            </Welcome>
          </Main>
        </Body>

        <StatusBar>
          <Box $w={333} $h={26}><StatusIcon $ml={8}><Icon name="search" size={13} /></StatusIcon><SearchText>Pište pro vyhledání (Ctrl+K)</SearchText></Box>
          <ClipLabel $ml={8} $w={40} $start $ls={-0.2}>Připraveno</ClipLabel>
          <ClipLabel $ml={9} $w={50} $ls={-0.25}>Souřadnice</ClipLabel>
          <Box $ml={3} $w={97} />
          <StatusIcon $ml={4}><Icon name="bug" size={16} /></StatusIcon>
          <ClipLabel $ml={13} $w={26} $ls={-0.2}>Měřítko</ClipLabel>
          <Box $ml={2} $w={94}><BoxText>1:29854291</BoxText><Steps $w={20} $single /></Box>
          <StatusIcon $ml={10}><Icon name="lock" size={16} /></StatusIcon>
          <ClipLabel $ml={7} $w={6}>Lupa</ClipLabel>
          <Box $ml={2} $w={98}><BoxText>100%</BoxText><Steps /></Box>
          <ClipLabel $ml={9} $w={17}>Rotace</ClipLabel>
          <Box $ml={9} $w={94}><BoxText>0,0 °</BoxText><Steps /></Box>
          <CheckBox><IconSvg width="12" height="12" viewBox="0 0 12 12"><path d="M2.500 5.500l2.500 4L9.500 2" stroke="#000" strokeWidth="2" fill="none" /></IconSvg></CheckBox>
          <ClipLabel $ml={5} $w={72} $start $ls={-0.25}>Vykreslování</ClipLabel>
          <StatusIcon $ml={15}><Icon name="globe" size={15} /></StatusIcon>
          <ClipLabel $ml={5} $w={62} $start $ls={-0.3}>EPSG:4326</ClipLabel>
          <StatusIcon $ml={15}><Icon name="message" size={17} /></StatusIcon>
          <SizeGrip />
        </StatusBar>

        <Dialog>
          <DialogTitle>
            <DialogName>Save Views</DialogName>
            <CloseButton><Glyph color="#4a2010" w={1.2} d="M2.500 2.500l5 5M7.500 2.500l-5 5" /></CloseButton>
          </DialogTitle>
          <DialogActions>
            <PushButton><Icon name="cancel" size={13} /><span><u>Z</u>rušit</span></PushButton>
            <PushButton $primary><Icon name="ok" size={16} /><span><u>O</u>K</span></PushButton>
          </DialogActions>
        </Dialog>
      </Window>
    </>
  );
}
